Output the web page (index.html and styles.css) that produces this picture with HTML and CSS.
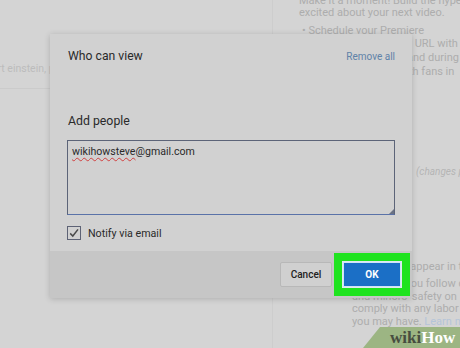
FILE: index.html
```html
<!DOCTYPE html>
<html>
<head>
<meta charset="utf-8">
<link rel="stylesheet" href="styles.css">
</head>
<body>
<div class="page">
  <div class="left-col">
    <div class="quote-row">bert einstein, physicist</div>
  </div>
  <div class="right-col">
    <div class="promo">
      <p class="line">Make it a moment! Build the hype</p>
      <p class="line p2">excited about your next video.</p>
      <p class="line bullet">• Schedule your Premiere</p>
      <p class="line p4">a URL with</p>
      <p class="line p5">and during</p>
      <p class="line p6">with fans in</p>
    </div>
    <div class="changes">(changes pending)</div>
    <div class="notice">
      <p class="line n1">Videos that appear in the</p>
      <p class="line n2">Make sure you follow c</p>
      <p class="line n3">and minors' safety on</p>
      <p class="line n4">comply with any labor l</p>
      <p class="line n5">you may have. <span class="learn">Learn more</span></p>
    </div>
  </div>
</div>

<div class="dialog">
  <div class="dialog-body">
    <div class="head">
      <span class="title">Who can view</span>
      <span class="remove">Remove all</span>
    </div>
    <div class="label">Add people</div>
    <div class="textarea"><span class="misspelled">wikihowsteve</span>@gmail.com<span class="grip"></span></div>
    <label class="notify">
      <span class="checkbox">
        <svg width="12" height="12" viewBox="0 0 12 12"><path d="M2.2 6.4 L4.8 9 L10 2.4" fill="none" stroke="#4a4a4a" stroke-width="1.5"/></svg>
      </span>
      <span>Notify via email</span>
    </label>
  </div>
  <div class="footer">
    <button class="btn cancel">Cancel</button>
    <button class="btn ok">OK</button>
  </div>
</div>

<div class="wikihow"><span class="wiki">wiki</span><span class="how">How</span></div>
</body>
</html>
```
FILE: styles.css
```css
html, body {
  margin: 0;
  padding: 0;
}
body {
  width: 460px;
  height: 348px;
  overflow: hidden;
  background: #d4d4d4;
  font-family: Roboto, "Liberation Sans", sans-serif;
  position: relative;
}
.page {
  display: flex;
  height: 348px;
}
.left-col {
  width: 272px;
  border-right: 1px solid #cdcdcd;
  flex: none;
}
.quote-row {
  margin-top: 57px;
  margin-left: -14px;
  height: 31px;
  border-bottom: 1px solid #cbcbcb;
  color: #bcbcbc;
  font-size: 10.5px;
  line-height: 24px;
  white-space: nowrap;
}
.right-col {
  flex: 1;
  padding-left: 26px;
  color: #adadad;
  font-size: 11px;
  white-space: nowrap;
  overflow: hidden;
}
.line {
  margin: 0;
  line-height: 14px;
}
.promo {
  margin-top: -6px;
}
.promo .p2 { margin-top: -2px; }
.promo .bullet {
  margin-top: 4px;
  padding-left: 3px;
}
.promo .p4 { margin-top: -1px; padding-left: 107px; }
.promo .p5 { padding-left: 108px; }
.promo .p6 { padding-left: 99px; }
.changes {
  margin-top: 86px;
  margin-left: 117px;
  font-size: 10px;
  line-height: 14px;
  font-style: italic;
  color: #b5b5b5;
}
.notice {
  margin-top: 82px;
  margin-left: 53px;
}
.notice .line { line-height: 12.5px; }
.notice .n2 { margin-top: 4.5px; }
.learn {
  color: #b4c4d8;
}

.dialog {
  position: absolute;
  left: 50px;
  top: 34px;
  width: 362px;
  height: 264px;
  background: #d1d1d1;
  box-shadow: 0 1px 6px rgba(0,0,0,0.18);
  display: flex;
  flex-direction: column;
}
.dialog-body {
  flex: 1;
  padding: 14px 17px 0 17px;
}
.head {
  display: flex;
  justify-content: space-between;
  align-items: center;
  height: 16px;
  padding-left: 1px;
}
.title {
  font-size: 12.2px;
  color: #2a2a2a;
}
.remove {
  font-size: 10px;
  color: #5f82a8;
}
.label {
  margin-top: 49px;
  line-height: 16px;
  padding-left: 1px;
  font-size: 12.3px;
  color: #2a2a2a;
}
.textarea {
  position: relative;
  margin-top: 11px;
  border: 1px solid #5c6478;
  border-bottom-color: #5a72a8;
  padding: 4px 4px;
  box-sizing: border-box;
  height: 75px;
  font-size: 10.6px;
  color: #2a2a2a;
}
.misspelled {
  text-decoration: underline wavy #d04040;
  text-decoration-thickness: 1px;
  text-underline-offset: 2px;
}
.grip {
  position: absolute;
  right: 0;
  bottom: 0;
  width: 0;
  height: 0;
  border-left: 5px solid transparent;
  border-bottom: 5px solid #6a7284;
}
.notify {
  display: flex;
  align-items: center;
  gap: 7px;
  margin-top: 11px;
  font-size: 10.7px;
  color: #2a2a2a;
}
.checkbox {
  width: 12px;
  height: 12px;
  border: 1px solid #5d6275;
  display: flex;
  align-items: center;
  justify-content: center;
}
.footer {
  height: 47px;
  background: #c6c6c6;
  display: flex;
  justify-content: flex-end;
  align-items: center;
  gap: 11px;
  padding-right: 11px;
}
.btn {
  font-family: Roboto, "Liberation Sans", sans-serif;
  font-size: 10px;
  height: 25px;
  border-radius: 2px;
  padding: 0;
  cursor: pointer;
}
.cancel {
  width: 52px;
  background: #d0d0d0;
  border: 1px solid #b8b8b8;
  color: #222;
  font-weight: 500;
}
.ok {
  width: 58px;
  background: #1b6fc6;
  border: 1px solid #cfe3f7;
  color: #fff;
  font-weight: bold;
  box-shadow: 0 0 0 1px #dfe9f2, 0 0 0 9px #1fe31f;
  border-radius: 0;
}

.wikihow {
  position: absolute;
  right: 0;
  bottom: 0;
  width: 97px;
  height: 21px;
  background: #9cb583;
  clip-path: polygon(17px 0, 100% 0, 100% 100%, 0 100%);
  font-family: "Liberation Serif", serif;
  font-weight: bold;
  font-size: 17px;
  line-height: 21px;
  padding-left: 27px;
  box-sizing: border-box;
  white-space: nowrap;
}
.wiki { color: #474d40; }
.how { color: #ffffff; }
```
